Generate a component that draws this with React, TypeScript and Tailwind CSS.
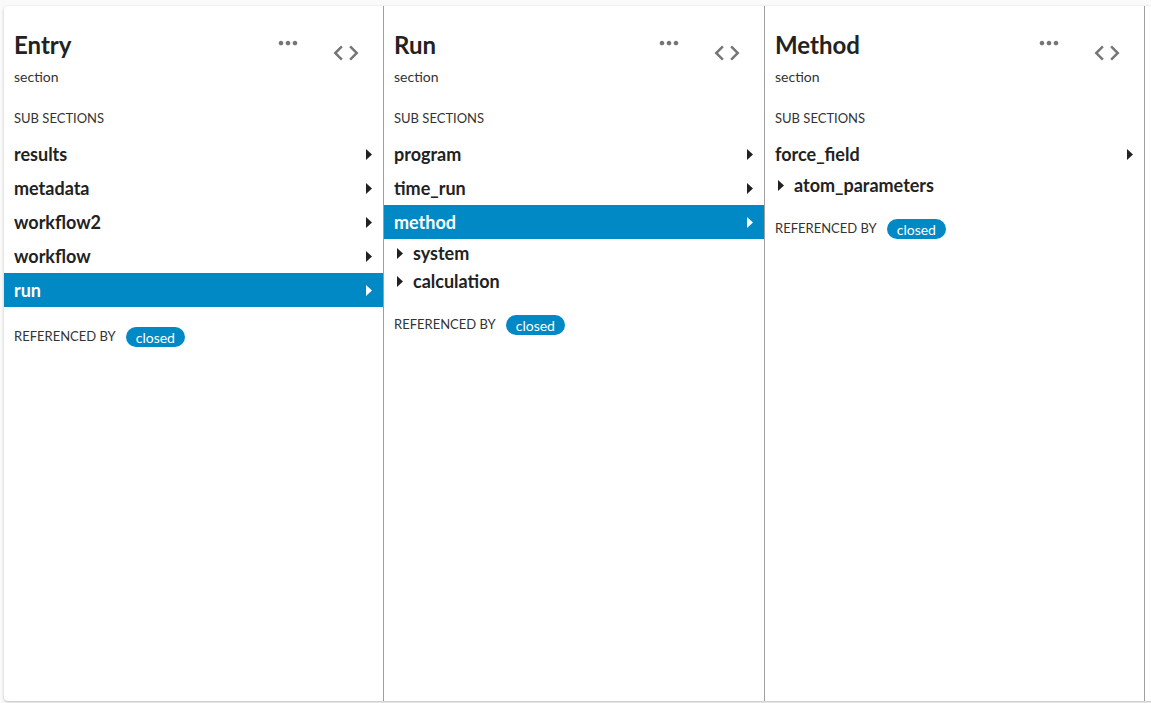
import React from 'react';

type Item = { name: string; selected?: boolean; nested?: boolean; arrow?: boolean };

type Column = { title: string; width: string; items: Item[] };

const font = { fontFamily: "Lato, 'Noto Sans', sans-serif" };

const columns: Column[] = [
  {
    title: 'Entry',
    width: 'w-[380px]',
    items: [
      { name: 'results', arrow: true },
      { name: 'metadata', arrow: true },
      { name: 'workflow2', arrow: true },
      { name: 'workflow', arrow: true },
      { name: 'run', arrow: true, selected: true },
    ],
  },
  {
    title: 'Run',
    width: 'w-[381px]',
    items: [
      { name: 'program', arrow: true },
      { name: 'time_run', arrow: true },
      { name: 'method', arrow: true, selected: true },
      { name: 'system', nested: true },
      { name: 'calculation', nested: true },
    ],
  },
  {
    title: 'Method',
    width: 'w-[380px]',
    items: [
      { name: 'force_field', arrow: true },
      { name: 'atom_parameters', nested: true },
    ],
  },
];

const Triangle = ({ color = '#212121' }: { color?: string }) => (
  <svg width="6" height="11" viewBox="0 0 6 11" className="shrink-0">
    <path d="M0 0 L6 5.5 L0 11 Z" fill={color} />
  </svg>
);

const Dots = () => (
  <svg width="28" height="28" viewBox="0 0 24 24" className="shrink-0 mt-[23px]">
    <path
      fill="#757575"
      d="M6 10c-1.1 0-2 .9-2 2s.9 2 2 2 2-.9 2-2-.9-2-2-2zm12 0c-1.1 0-2 .9-2 2s.9 2 2 2 2-.9 2-2-.9-2-2-2zm-6 0c-1.1 0-2 .9-2 2s.9 2 2 2 2-.9 2-2-.9-2-2-2z"
    />
  </svg>
);

const Code = () => (
  <svg width="30" height="30" viewBox="0 0 24 24" className="shrink-0 mt-[32px] ml-[29px] mr-[22px]">
    <path
      fill="#757575"
      d="M9.4 16.6L4.8 12l4.6-4.6L8 6l-6 6 6 6 1.4-1.4zm5.2 0l4.6-4.6-4.6-4.6L16 6l6 6-6 6-1.4-1.4z"
    />
  </svg>
);

const Row = ({ item }: { item: Item }) => {
  if (item.nested) {
    return (
      <div className="h-[28px] flex items-center pl-[13px] gap-[10px] text-[18px] font-bold text-[#222222]">
        <Triangle />
        <span>{item.name}</span>
      </div>
    );
  }
  return (
    <div
      className={`h-[34px] flex items-center justify-between pl-[10px] pr-[11px] text-[18px] font-bold ${
        item.selected ? 'bg-[#0089c4] text-white' : 'text-[#222222]'
      }`}
    >
      <span>{item.name}</span>
      {item.arrow && <Triangle color={item.selected ? '#ffffff' : '#212121'} />}
    </div>
  );
};

const Lane = ({ col }: { col: Column }) => (
  <div className={`${col.width} shrink-0 h-full border-r border-[#9e9e9e] flex flex-col`}>
    <div className="flex items-start">
      <div className="flex-1 pl-[10px] pt-[23px]">
        <div className="text-[24px] leading-[32px] font-bold text-[#222222]">{col.title}</div>
        <div className="mt-[6px] text-[14px] leading-[20px] text-[#333333]">section</div>
      </div>
      <Dots />
      <Code />
    </div>
    <div className="mt-[21px] pl-[10px] text-[13px] leading-[20px] text-[#333333]">SUB SECTIONS</div>
    <div className="mt-[9px]">
      {col.items.map((it) => (
        <Row key={it.name} item={it} />
      ))}
    </div>
    <div className="mt-[20px] pl-[10px] h-[20px] flex items-center gap-[10px]">
      <span className="text-[13px] text-[#333333]">REFERENCED BY</span>
      <span className="h-[20px] px-[10px] rounded-full bg-[#0089c4] text-white text-[14px] flex items-center">
        closed
      </span>
    </div>
  </div>
);

export default function App() {
  return (
    <div className="h-[703px] w-full overflow-hidden bg-[#fafafa] pt-[6px] pl-[4px]" style={font}>
      <div className="h-[695px] w-[1200px] bg-white rounded-[4px] shadow-[0_1px_3px_rgba(0,0,0,0.25)] flex overflow-hidden">
        {columns.map((c) => (
          <Lane key={c.title} col={c} />
        ))}
        <div className="flex-1" />
      </div>
    </div>
  );
}
